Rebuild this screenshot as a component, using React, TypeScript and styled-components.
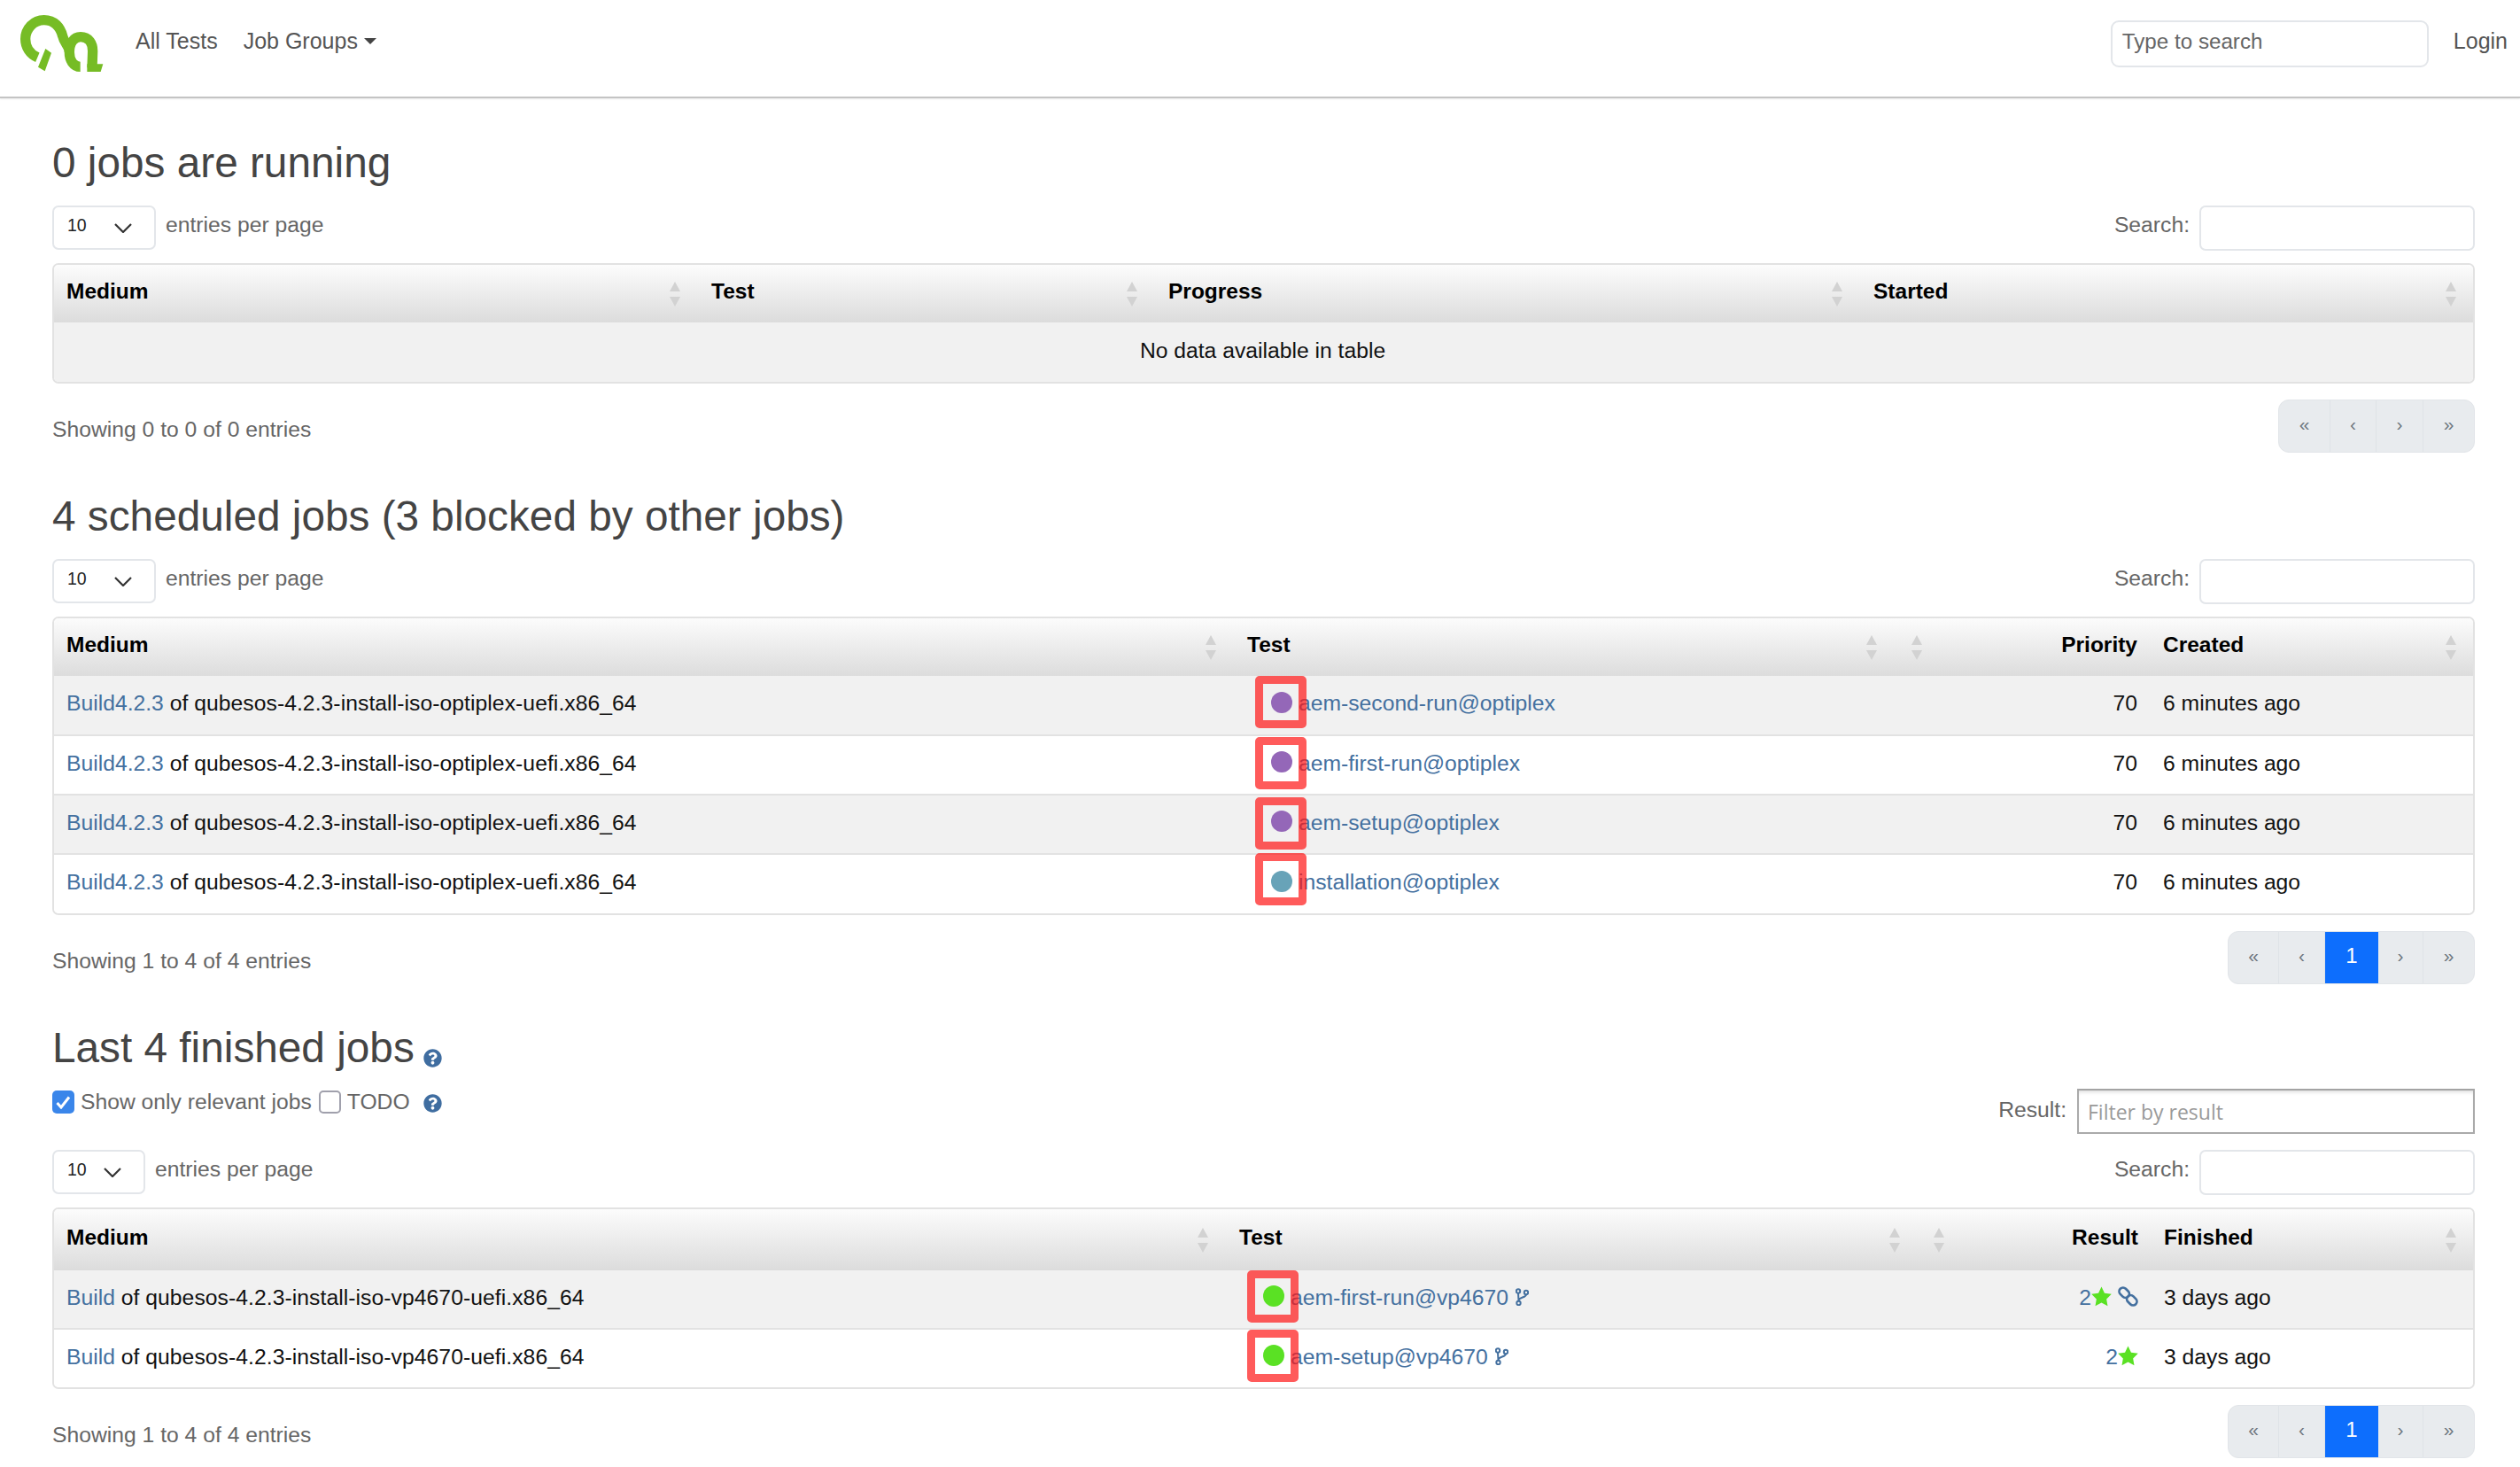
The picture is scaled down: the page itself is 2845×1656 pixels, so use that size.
import React from "react";
import styled, { createGlobalStyle } from "styled-components";

const Global = createGlobalStyle`
  html, body { margin: 0; padding: 0; background: #fff; }
  body { font-family: "Liberation Sans", Arial, sans-serif; font-size: 24.7px; color: #212529; }
  * { box-sizing: border-box; }
`;

const LINK = "#44709f";

const Nav = styled.header`
  height: 111px;
  border-bottom: 2px solid #c4c4c4;
  box-shadow: 0 1px 2px rgba(0, 0, 0, 0.08);
  display: flex;
  align-items: flex-start;
  padding: 0 14px 0 23px;
`;
const LogoBox = styled.svg`
  width: 94px;
  height: 66px;
  margin-top: 17px;
  flex: none;
`;
const NavLink = styled.a<{ $ml: number }>`
  font-size: 25px;
  line-height: 30px;
  margin-top: 31px;
  color: #555;
  margin-left: ${(p) => p.$ml}px;
  white-space: nowrap;
`;
const Caret = styled.span`
  display: inline-block;
  margin-left: 7px;
  vertical-align: 5px;
  border-top: 7px solid #444;
  border-left: 7px solid transparent;
  border-right: 7px solid transparent;
`;
const Spacer = styled.div`
  flex: 1;
`;
const NavSearch = styled.div`
  width: 359px;
  height: 53px;
  margin-top: 23px;
  margin-right: 28px;
  border: 2px solid #e3e6ea;
  border-radius: 9px;
  padding: 0 11px;
  line-height: 44px;
  font-size: 24.2px;
  color: #666;
`;

const Main = styled.main`
  padding: 44px 51px 0 59px;
`;
const Section = styled.section`
  margin-bottom: 43px;
`;
const Heading = styled.h2`
  margin: 0 0 19px;
  font-size: 47.75px;
  line-height: 58px;
  height: 58px;
  font-weight: 400;
  color: #444;
  white-space: nowrap;
`;
const HelpSmall = styled.span`
  display: inline-flex;
  margin-left: 10px;
  vertical-align: -6px;
`;
const FilterRow = styled.div`
  display: flex;
  justify-content: space-between;
  align-items: flex-start;
  height: 51px;
  margin: -2px 0 18px;
`;
const Checks = styled.div`
  display: flex;
  align-items: center;
  height: 30px;
  color: #666;
  white-space: nowrap;
`;
const CheckBox = styled.span<{ $on?: boolean }>`
  width: 25px;
  height: 26px;
  flex: none;
  border-radius: 5px;
  display: inline-flex;
  align-items: center;
  justify-content: center;
  background: ${(p) => (p.$on ? "#3a86ea" : "#fff")};
  border: ${(p) => (p.$on ? "none" : "2px solid #a0a0ac")};
`;
const CheckLabel = styled.span<{ $gap: number }>`
  margin: 0 ${(p) => p.$gap}px 0 7px;
`;
const ResultFilter = styled.div`
  display: flex;
  align-items: flex-start;
  color: #666;
`;
const ResultLabel = styled.span`
  line-height: 48px;
  margin-right: 12px;
`;
const ResultInput = styled.div`
  width: 449px;
  height: 51px;
  border: 2px solid #aaa;
  border-top-color: #a4a4a4;
  box-shadow: inset 0 4px 5px -3px rgba(0, 0, 0, 0.18);
  padding-left: 10px;
  font-family: "Open Sans", sans-serif;
  font-size: 23px;
  line-height: 49px;
  color: #9a9a9a;
`;
const Controls = styled.div`
  display: flex;
  justify-content: space-between;
  align-items: flex-start;
  height: 51px;
  margin-bottom: 14px;
`;
const Group = styled.div`
  display: flex;
  align-items: flex-start;
  color: #666;
`;
const GroupLabel = styled.span<{ $side: "l" | "r" }>`
  line-height: 44px;
  ${(p) => (p.$side === "l" ? "margin-left: 11px;" : "margin-right: 11px;")}
`;
const Select = styled.div<{ $w: number }>`
  width: ${(p) => p.$w}px;
  height: 50px;
  border: 2px solid #e3e6ea;
  border-radius: 7px;
  padding: 0 25px 0 15px;
  display: flex;
  align-items: center;
  justify-content: space-between;
  font-size: 19.5px;
  color: #222;
`;
const SelectValue = styled.span`
  margin-top: -6px;
`;
const SearchInput = styled.div`
  width: 311px;
  height: 51px;
  border: 2px solid #e3e6ea;
  border-radius: 7px;
`;

const TableWrap = styled.div`
  border: 2px solid #e2e2e2;
  border-radius: 7px;
  overflow: hidden;
`;
const Table = styled.table`
  width: 100%;
  border-collapse: collapse;
  table-layout: fixed;
`;
const Col = styled.col<{ $w?: number }>`
  ${(p) => (p.$w ? `width: ${p.$w}px;` : "")}
`;
const Th = styled.th<{ $right?: boolean; $h: number }>`
  position: relative;
  height: ${(p) => p.$h}px;
  padding: 0 ${(p) => (p.$right ? 13 : 16)}px 5px 16px;
  background: linear-gradient(#fcfcfc, #dcdcdc);
  font-size: 24.5px;
  font-weight: 700;
  color: #000;
  text-align: ${(p) => (p.$right ? "right" : "left")};
  white-space: nowrap;
  &:first-child {
    padding-left: 14px;
  }
`;
const SortIcon = styled.svg`
  position: absolute;
  right: 19px;
  top: 50%;
  margin-top: -14px;
  width: 12px;
  height: 28px;
`;
const Tr = styled.tr<{ $alt?: boolean; $first?: boolean }>`
  background: ${(p) => (p.$alt ? "#f1f1f1" : "#fff")};
  border-top: ${(p) => (p.$first ? "0" : "2px solid #e2e2e2")};
`;
const Td = styled.td<{ $right?: boolean; $center?: boolean; $h: number }>`
  position: relative;
  height: ${(p) => p.$h}px;
  padding: 0 ${(p) => (p.$right ? 13 : 16)}px 4px 16px;
  color: #111;
  text-align: ${(p) => (p.$right ? "right" : p.$center ? "center" : "left")};
  white-space: nowrap;
  &:first-child {
    padding-left: 14px;
  }
`;
const A = styled.a`
  color: ${LINK};
`;
const MediumName = styled.span`
  letter-spacing: 0.06px;
`;
const TestCell = styled.div`
  display: flex;
  align-items: center;
  padding-left: 27px;
`;
const Dot = styled.span<{ $c: string }>`
  width: 24px;
  height: 24px;
  margin-top: -3px;
  flex: none;
  border-radius: 50%;
  background: ${(p) => p.$c};
`;
const TestLink = styled.a`
  margin-left: 7px;
  color: ${LINK};
`;
const BranchIcon = styled.svg`
  width: 15px;
  height: 20px;
  margin-left: 8px;
  margin-top: -2px;
  flex: none;
`;
const Marker = styled.span<{ $top: number }>`
  position: absolute;
  left: 25px;
  top: ${(p) => p.$top}px;
  width: 58px;
  height: 59px;
  border: 9px solid rgba(255, 22, 22, 0.7);
  border-radius: 5px;
`;
const ResultInner = styled.span`
  display: inline-flex;
  align-items: center;
  color: ${LINK};
`;
const IconGap = styled.svg`
  margin-left: 7px;
  margin-top: -3px;
  width: 23px;
  height: 23px;
`;
const Star = styled.svg`
  width: 23px;
  height: 23px;
  margin-top: -3px;
`;

const Footer = styled.div`
  display: flex;
  justify-content: space-between;
  align-items: flex-start;
  margin-top: 18px;
`;
const Showing = styled.div`
  color: #666;
  margin-top: 19px;
  line-height: 30px;
`;
const Pager = styled.div`
  display: flex;
  height: 60px;
  background: #e8ebee;
  border: 1px solid #e2e5e9;
  border-radius: 12px;
  overflow: hidden;
`;
const PageCell = styled.div<{ $w: number; $on?: boolean; $last?: boolean }>`
  width: ${(p) => p.$w}px;
  display: flex;
  align-items: center;
  justify-content: center;
  padding-bottom: 5px;
  font-size: ${(p) => (p.$on ? 24 : 21)}px;
  color: ${(p) => (p.$on ? "#fff" : "#6c757d")};
  background: ${(p) => (p.$on ? "#0d6efd" : "transparent")};
  border-right: ${(p) => (p.$last || p.$on ? "0" : "1px solid #dfe3e7")};
`;

const Logo = () => (
  <LogoBox viewBox="70 54 282 198" aria-label="openQA">
    <g fill="none" stroke="#76bc25" strokeWidth="34">
      <path d="M128 197C102 186 87 162 87 135C87 100 115 71 150 71C186 71 205 95 213 125C218 148 236 160 236 180" />
      <path d="M273 229C249 229 236 206 236 180C236 150 250 128 274 128C302 128 315 150 315 176L313 232" />
    </g>
    <path fill="#76bc25" d="M155 168L175 182L153 244L130 230ZM296 220H350L342 246H296Z" />
  </LogoBox>
);

const Sort = () => (
  <SortIcon viewBox="0 0 12 28">
    <path fill="#d2d2d2" d="M6 0L12 11H0ZM0 17H12L6 28Z" />
  </SortIcon>
);

const Help = ({ mt }: { mt?: number }) => (
  <svg width="21" height="21" viewBox="0 0 512 512" style={mt ? { marginTop: mt } : undefined}>
    <path
      fill="#3f6da0"
      d="M504 256c0 137-111 248-248 248S8 393 8 256 119 8 256 8s248 111 248 248zM262.700 90c-54.500 0-89.300 23-116.600 63.800-3.500 5.300-2.400 12.400 2.700 16.300l34.700 26.300c5.200 3.900 12.600 3 16.700-2.100 17.900-22.700 30.100-35.800 57.300-35.800 20.400 0 45.700 13.100 45.700 33 0 15-12.400 22.700-32.600 34-23.600 13.200-54.800 29.700-54.800 70.900V300c0 6.600 5.400 12 12 12h56c6.600 0 12-5.400 12-12v-1.300c0-28.600 83.500-29.800 83.500-107.200C379 133.100 318.500 90 262.700 90zM256 338c-25.500 0-46.200 20.700-46.200 46.200 0 25.500 20.700 46.200 46.200 46.200s46.200-20.700 46.200-46.200c0-25.500-20.700-46.200-46.200-46.200z"
    />
  </svg>
);

const Branch = () => (
  <BranchIcon viewBox="0 0 15 20" fill="none" stroke={LINK} strokeWidth="2">
    <circle cx="3" cy="3.500" r="2.200" />
    <circle cx="12" cy="5" r="2.200" />
    <circle cx="3.500" cy="17" r="2.200" />
    <path d="M3 5.700L3.500 14.800M12 7.200C12 11 4 10 3.500 14" />
  </BranchIcon>
);

const StarIcon = () => (
  <Star viewBox="0 0 24 24">
    <path fill="#5ae124" d="M12 .5L15.600 8L23.800 9.200L17.900 15L19.300 23.200L12 19.300L4.700 23.200L6.100 15L.2 9.200L8.400 8Z" />
  </Star>
);

const LinkIcon = () => (
  <IconGap viewBox="0 0 24 24" fill="none" stroke={LINK} strokeWidth="2.800">
    <rect x="1" y="3" width="13" height="9" rx="4.500" transform="rotate(45 7.500 7.500)" />
    <rect x="10" y="12" width="13" height="9" rx="4.500" transform="rotate(45 16.500 16.500)" />
  </IconGap>
);

const Chevron = () => (
  <svg width="20" height="11" viewBox="0 0 20 11" fill="none" stroke="#333" strokeWidth="2.200">
    <path d="M1 1L10 10L19 1" />
  </svg>
);

const ControlBar = ({ w }: { w: number }) => (
  <Controls>
    <Group>
      <Select $w={w}>
        <SelectValue>10</SelectValue>
        <Chevron />
      </Select>
      <GroupLabel $side="l">entries per page</GroupLabel>
    </Group>
    <Group>
      <GroupLabel $side="r">Search:</GroupLabel>
      <SearchInput />
    </Group>
  </Controls>
);

const Pagination = ({ widths, one }: { widths: number[]; one?: boolean }) => (
  <Pager>
    <PageCell $w={widths[0]}>«</PageCell>
    <PageCell $w={widths[1]}>‹</PageCell>
    {one && (
      <PageCell $w={60} $on>
        1
      </PageCell>
    )}
    <PageCell $w={widths[2]}>›</PageCell>
    <PageCell $w={widths[3]} $last>
      »
    </PageCell>
  </Pager>
);

type Run = { name: string; color: string; top: number; branch?: boolean; result?: React.ReactNode; when: string };

const scheduled: Run[] = [
  { name: "aem-second-run@optiplex", color: "#9467b8", top: 0, when: "6 minutes ago" },
  { name: "aem-first-run@optiplex", color: "#9467b8", top: 1, when: "6 minutes ago" },
  { name: "aem-setup@optiplex", color: "#9467b8", top: 2, when: "6 minutes ago" },
  { name: "installation@optiplex", color: "#68a3b8", top: -2, when: "6 minutes ago" },
];

const finished: Run[] = [
  {
    name: "aem-first-run@vp4670",
    color: "#5ae124",
    top: 0,
    branch: true,
    when: "3 days ago",
    result: (
      <ResultInner>
        2<StarIcon />
        <LinkIcon />
      </ResultInner>
    ),
  },
  {
    name: "aem-setup@vp4670",
    color: "#5ae124",
    top: 0,
    branch: true,
    when: "3 days ago",
    result: (
      <ResultInner>
        2<StarIcon />
      </ResultInner>
    ),
  },
];

const Medium = ({ build, name }: { build: string; name: string }) => (
  <>
    <A>{build}</A> of <MediumName>{name}</MediumName>
  </>
);

const JobRows = ({
  rows,
  build,
  medium,
  priority,
  h,
}: {
  rows: Run[];
  build: string;
  medium: string;
  priority: boolean;
  h: number;
}) => (
  <tbody>
    {rows.map((r, i) => (
      <Tr key={r.name} $alt={i % 2 === 0} $first={i === 0}>
        <Td $h={h}>
          <Medium build={build} name={medium} />
        </Td>
        <Td $h={h}>
          <TestCell>
            <Dot $c={r.color} />
            <TestLink>{r.name}</TestLink>
            {r.branch && <Branch />}
          </TestCell>
          <Marker $top={r.top} />
        </Td>
        <Td $h={h} />
        <Td $h={h} $right>
          {priority ? "70" : r.result}
        </Td>
        <Td $h={h}>{r.when}</Td>
      </Tr>
    ))}
  </tbody>
);

const JobHead = ({ cols, label, when, h }: { cols: number[]; label: string; when: string; h: number }) => (
  <>
    <colgroup>
      {cols.map((w, i) => (
        <Col key={i} $w={w} />
      ))}
      <Col />
    </colgroup>
    <thead>
      <tr>
        <Th $h={h}>
          Medium
          <Sort />
        </Th>
        <Th $h={h}>
          Test
          <Sort />
        </Th>
        <Th $h={h}>
          <Sort />
        </Th>
        <Th $h={h} $right>
          {label}
        </Th>
        <Th $h={h}>
          {when}
          <Sort />
        </Th>
      </tr>
    </thead>
  </>
);

export default function App() {
  return (
    <>
      <Global />
      <Nav>
        <Logo />
        <NavLink $ml={36}>All Tests</NavLink>
        <NavLink $ml={29}>
          Job Groups
          <Caret />
        </NavLink>
        <Spacer />
        <NavSearch>Type to search</NavSearch>
        <NavLink $ml={0}>Login</NavLink>
      </Nav>
      <Main>
        <Section>
          <Heading>0 jobs are running</Heading>
          <ControlBar w={117} />
          <TableWrap>
            <Table>
              <colgroup>
                <Col $w={726} />
                <Col $w={516} />
                <Col $w={796} />
                <Col />
              </colgroup>
              <thead>
                <tr>
                  {["Medium", "Test", "Progress", "Started"].map((h) => (
                    <Th key={h} $h={65}>
                      {h}
                      <Sort />
                    </Th>
                  ))}
                </tr>
              </thead>
              <tbody>
                <Tr $alt $first>
                  <Td colSpan={4} $center $h={67}>
                    No data available in table
                  </Td>
                </Tr>
              </tbody>
            </Table>
          </TableWrap>
          <Footer>
            <Showing>Showing 0 to 0 of 0 entries</Showing>
            <Pagination widths={[58, 52, 53, 57]} />
          </Footer>
        </Section>
        <Section>
          <Heading>4 scheduled jobs (3 blocked by other jobs)</Heading>
          <ControlBar w={117} />
          <TableWrap>
            <Table>
              <JobHead cols={[1331, 746, 51, 237]} label="Priority" when="Created" h={65} />
              <JobRows
                rows={scheduled}
                build="Build4.2.3"
                medium="qubesos-4.2.3-install-iso-optiplex-uefi.x86_64"
                priority
                h={67}
              />
            </Table>
          </TableWrap>
          <Footer>
            <Showing>Showing 1 to 4 of 4 entries</Showing>
            <Pagination widths={[57, 52, 51, 57]} one />
          </Footer>
        </Section>
        <Section>
          <Heading>
            Last 4 finished jobs
            <HelpSmall>
              <Help />
            </HelpSmall>
          </Heading>
          <FilterRow>
            <Checks>
              <CheckBox $on>
                <svg width="17" height="15" viewBox="0 0 17 15" fill="none" stroke="#fff" strokeWidth="3">
                  <path d="M1.500 8L6 13L15 1.500" />
                </svg>
              </CheckBox>
              <CheckLabel $gap={8}>Show only relevant jobs</CheckLabel>
              <CheckBox />
              <CheckLabel $gap={15}>TODO</CheckLabel>
              <Help mt={2} />
            </Checks>
            <ResultFilter>
              <ResultLabel>Result:</ResultLabel>
              <ResultInput>Filter by result</ResultInput>
            </ResultFilter>
          </FilterRow>
          <ControlBar w={105} />
          <TableWrap>
            <Table>
              <JobHead cols={[1322, 781, 50, 213]} label="Result" when="Finished" h={69} />
              <JobRows
                rows={finished}
                build="Build"
                medium="qubesos-4.2.3-install-iso-vp4670-uefi.x86_64"
                priority={false}
                h={66}
              />
            </Table>
          </TableWrap>
          <Footer>
            <Showing>Showing 1 to 4 of 4 entries</Showing>
            <Pagination widths={[57, 52, 51, 57]} one />
          </Footer>
        </Section>
      </Main>
    </>
  );
}
